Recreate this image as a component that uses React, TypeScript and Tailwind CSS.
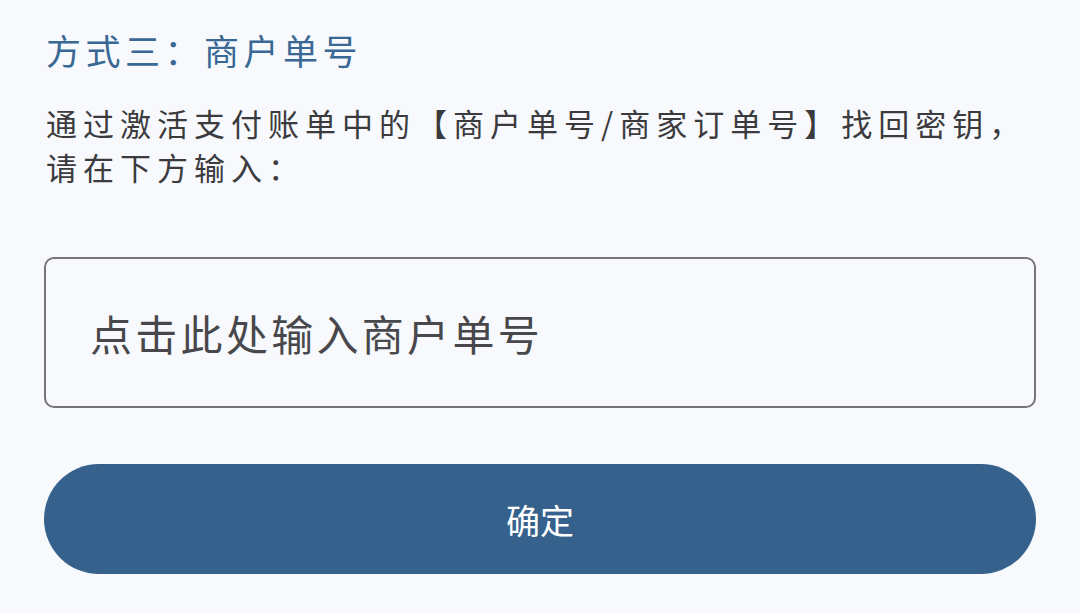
import React from 'react'

const font = '"Noto Sans CJK SC", "Noto Sans", sans-serif'

export default function App() {
  return (
    <div className="min-h-[613px] w-full bg-[#f7f9fc]" style={{ fontFamily: font }}>
      <div className="px-[44px] pt-[28px]">
        <h2 className="pl-[2px] text-[35px] leading-[44px] tracking-[4.5px] text-[#3a6894] whitespace-nowrap">
          方式三：商户单号
        </h2>

        <p className="mt-[29px] pl-[2px] text-[31px] leading-[44px] tracking-[6px] text-[#3b3b3e] whitespace-nowrap">
          通过激活支付账单中的【商户单号/商家订单号】找回密钥，
          <br />
          请在下方输入：
        </p>

        <div className="mt-[68px] flex h-[151px] items-center rounded-[10px] border-2 border-[#76767a] pl-[44px]">
          <span className="text-[42px] leading-none tracking-[3.3px] text-[#48484c] whitespace-nowrap">
            点击此处输入商户单号
          </span>
        </div>

        <button className="mt-[56px] flex h-[110px] w-full items-center justify-center rounded-full bg-[#35618c] text-[34px] font-normal text-white">
          确定
        </button>
      </div>
    </div>
  )
}
